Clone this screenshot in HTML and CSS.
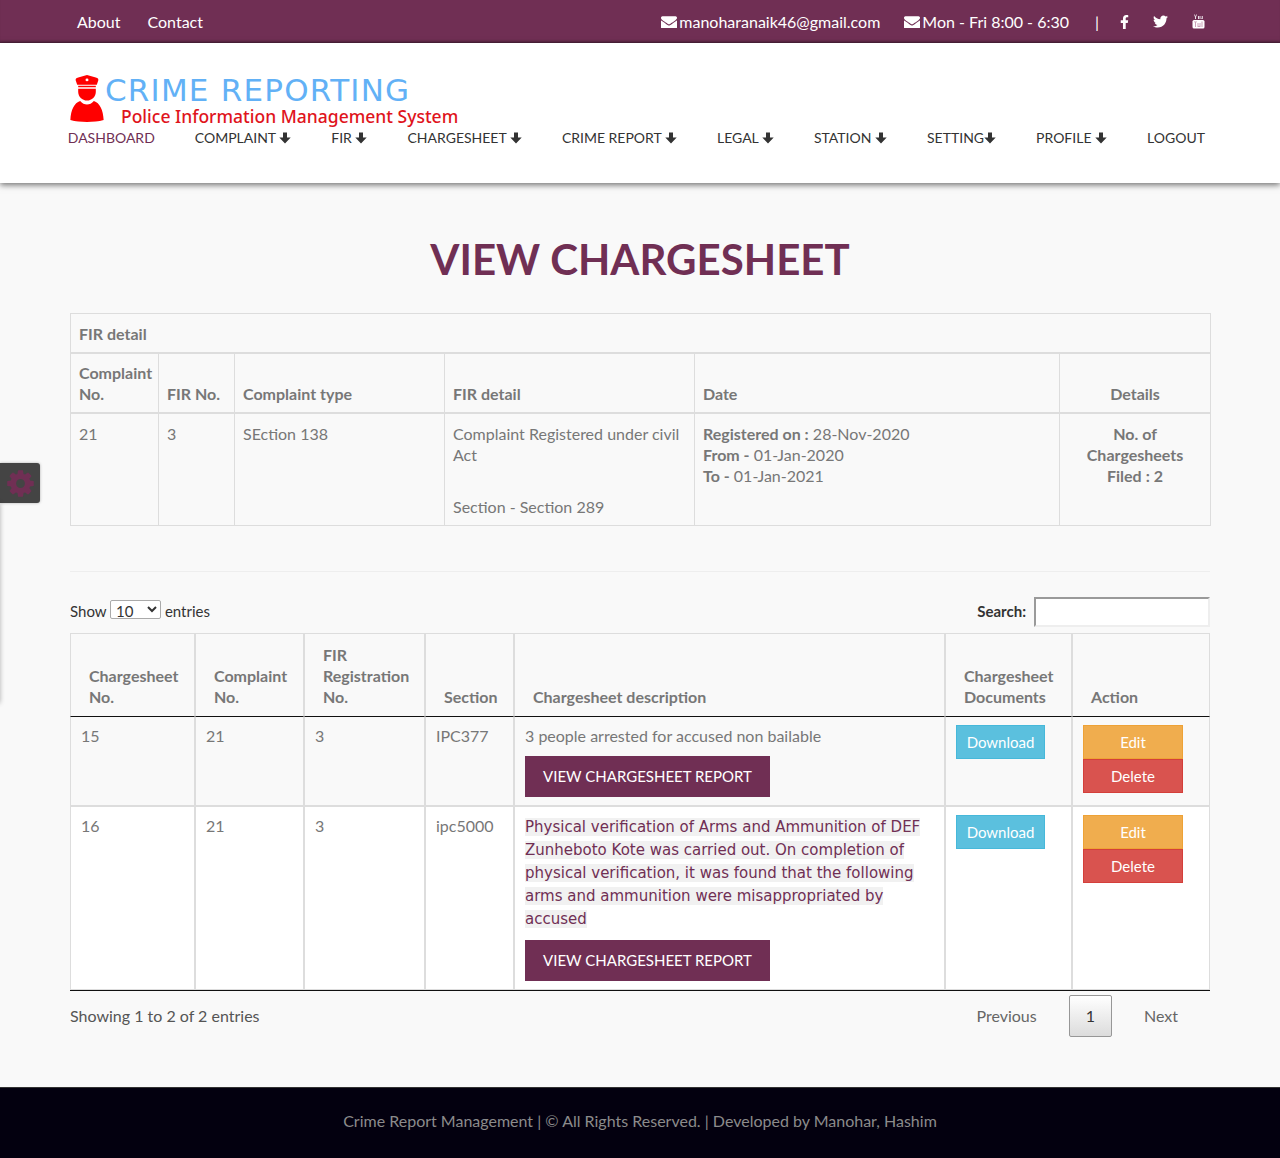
FILE: index.html
```html
<!DOCTYPE html>
<html lang="en">

    <head>
        <meta charset="UTF-8">
        <meta name="viewport" content="width=device-width, initial-scale=1.0">
        <title>View Chargesheet</title>
        <link rel="stylesheet" href="styles.css">
    </head>

    <body>
        <svg class="sprites" width="0" height="0">
            <symbol id="i-mail" viewBox="0 256 1792 1280">
                <path d="M1792 710v794q0 66-47 113t-113 47h-1472q-66 0-113-47t-47-113v-794q44 49 101 87 362 246 497 345 57 42 92.500 65.500t94.500 48 110 24.500h2q51 0 110-24.500t94.500-48 92.500-65.500q170-123 498-345 57-39 100-87zm0-294q0 79-49 151t-122 123q-376 261-468 325-10 7-42.500 30.500t-54 38-52 32.500-57.500 27-50 9h-2q-23 0-50-9t-57.500-27-52-32.500-54-38-42.500-30.500q-91-64-262-182.500t-205-142.500q-62-42-117-115.500t-55-136.500q0-78 41.500-130t118.500-52h1472q65 0 112.500 47t47.500 113z"/>
            </symbol>
            <symbol id="i-down" viewBox="0 0 12 12">
                <path d="M4 0.500h4v5h3.700l-5.700 6-5.700-6h3.700z"/>
            </symbol>
        </svg>

        <div class="topbar">
            <div class="topbar-links">
                <a href="#">About</a>
                <a href="#">Contact</a>
            </div>
            <div class="topbar-info">
                <span class="info"><svg class="mail"><use href="#i-mail"/></svg>manoharanaik46@gmail.com</span>
                <span class="info"><svg class="mail"><use href="#i-mail"/></svg>Mon - Fri 8:00 - 6:30</span>
                <span class="sep">|</span>
                <svg class="social fb" viewBox="0 0 320 512"><path d="M279.14 288l14.22-92.66h-88.91v-60.13c0-25.35 12.42-50.06 52.24-50.06h40.42V6.26S260.43 0 225.36 0c-73.22 0-121.08 44.38-121.08 124.72v70.62H22.89V288h81.39v224h100.17V288z"/></svg>
                <svg class="social tw" viewBox="0 0 512 512"><path d="M459.37 151.716c.325 4.548.325 9.097.325 13.645 0 138.72-105.583 298.558-298.558 298.558-59.452 0-114.68-17.219-161.137-47.106 8.447.974 16.568 1.299 25.34 1.299 49.055 0 94.213-16.568 130.274-44.832-46.132-.975-84.792-31.188-98.112-72.772 6.498.974 12.995 1.624 19.818 1.624 9.421 0 18.843-1.3 27.614-3.573-48.081-9.747-84.143-51.98-84.143-102.985v-1.299c13.969 7.797 30.214 12.67 47.431 13.319-28.264-18.843-46.781-51.005-46.781-87.391 0-19.492 5.197-37.36 14.294-52.954 51.655 63.675 129.3 105.258 216.365 109.807-1.624-7.797-2.599-15.918-2.599-24.04 0-57.828 46.782-104.934 104.934-104.934 30.213 0 57.502 12.67 76.67 33.137 23.715-4.548 46.456-13.32 66.599-25.34-7.798 24.366-24.366 44.833-46.132 57.827 21.117-2.273 41.584-8.122 60.426-16.243-14.292 20.791-32.161 39.308-52.628 54.253z"/></svg>
                <svg class="social yt" viewBox="0 0 13 15">
                    <path d="M2 0.500l1 2.500v2h1v-2l1-2.500h-.800l-.700 1.700-.700-1.700zM6 2h1.500v3h-1.500zM8.500 2h.800v2.500h.700v-2.500h.800v3h-2.300z" fill="#e9dfe6"/>
                    <rect x="0.500" y="6" width="12" height="8.500" rx="1.500" fill="#fff"/>
                    <path d="M2 7.500h3v.800h-1v4.700h-1v-4.700h-1zM5.500 9h1v3h1v-3h1v4h-3zM9.500 7.500h1v5.500h-1z" fill="#c9a3b8"/>
                </svg>
            </div>
        </div>

        <header class="header">
            <div class="logo">
                <svg class="logo-icon" viewBox="0 0 34 48">
                    <path d="M17 0l9 2.500c2 .5 3 1.500 2.500 3l-1.500 4.500h-20l-1.500-4.500c-.500-1.500.500-2.500 2.500-3z"/>
                    <path d="M8 11h18v1.500h-18z"/>
                    <path d="M8 14h18v3c0 5-4 9-9 9s-9-4-9-9z"/>
                    <path d="M10 26.500c2 2.500 4.500 3.500 7 3.500s5-1 7-3.500c6 2 9.500 9 10 19.500-5 1.500-11 2-17 2s-12-.500-17-2c.500-10.500 4-17.500 10-19.500z"/>
                    <circle cx="17" cy="5" r="1.500" fill="#fff"/>
                </svg>
                <div class="logo-text">
                    <div class="logo-name">CRIME REPORTING</div>
                    <div class="logo-sub">Police Information Management System</div>
                </div>
            </div>
            <nav class="nav">
                <a href="#" class="active">DASHBOARD</a>
                <a href="#">COMPLAINT <svg class="down"><use href="#i-down"/></svg></a>
                <a href="#">FIR <svg class="down"><use href="#i-down"/></svg></a>
                <a href="#">CHARGESHEET <svg class="down"><use href="#i-down"/></svg></a>
                <a href="#">CRIME REPORT <svg class="down"><use href="#i-down"/></svg></a>
                <a href="#">LEGAL <svg class="down"><use href="#i-down"/></svg></a>
                <a href="#">STATION <svg class="down"><use href="#i-down"/></svg></a>
                <a href="#">SETTING<svg class="down"><use href="#i-down"/></svg></a>
                <a href="#">PROFILE <svg class="down"><use href="#i-down"/></svg></a>
                <a href="#">LOGOUT</a>
            </nav>
        </header>

        <div class="switcher">
            <svg class="gear" viewBox="0 0 1792 1792"><path d="M1152 896q0-106-75-181t-181-75-181 75-75 181 75 181 181 75 181-75 75-181zm512-109v222q0 12-8 23t-20 13l-185 28q-19 54-39 91 35 50 107 138 10 12 10 25t-9 23q-27 37-99 108t-94 71q-12 0-26-9l-138-108q-44 23-91 38-16 136-29 186-7 28-36 28h-222q-14 0-24.500-8.500t-11.500-21.500l-28-184q-49-16-90-37l-141 107q-10 9-25 9-14 0-25-11-126-114-165-168-7-10-7-23 0-12 8-23 15-21 51-66.500t54-70.500q-27-50-41-99l-183-27q-13-2-21-12.500t-8-23.500v-222q0-12 8-23t19-13l186-28q14-46 39-92-40-57-107-138-10-12-10-24 0-10 9-23 26-36 98.500-107.500t94.500-71.500q13 0 26 10l138 107q44-23 91-38 16-136 29-186 7-28 36-28h222q14 0 24.500 8.500t11.500 21.500l28 184q49 16 90 37l142-107q9-9 24-9 13 0 25 10 129 119 165 170 7 8 7 22 0 12-8 23-15 21-51 66.500t-54 70.500q26 50 41 98l183 28q13 2 21 12.500t8 23.500z"/></svg>
        </div>
        <div class="switcher-panel"></div>

        <main class="main">
            <h1 class="title">VIEW CHARGESHEET</h1>

            <table class="detail">
                <colgroup>
                    <col class="d1"><col class="d2"><col class="d3"><col class="d4"><col class="d5"><col class="d6">
                </colgroup>
                <thead>
                    <tr><th colspan="6" class="detail-head">FIR detail</th></tr>
                    <tr>
                        <th>Complaint No.</th>
                        <th>FIR No.</th>
                        <th>Complaint type</th>
                        <th>FIR detail</th>
                        <th>Date</th>
                        <th class="center">Details</th>
                    </tr>
                </thead>
                <tbody>
                    <tr>
                        <td>21</td>
                        <td>3</td>
                        <td>SEction 138</td>
                        <td>Complaint Registered under civil Act<br><br><span class="section-line">Section - Section 289</span></td>
                        <td><b>Registered on :</b> 28-Nov-2020<br><b>From -</b> 01-Jan-2020<br><b>To -</b> 01-Jan-2021</td>
                        <td class="center"><b>No. of Chargesheets Filed</b> <b>: 2</b></td>
                    </tr>
                </tbody>
            </table>

            <hr class="rule">

            <div class="controls">
                <label class="length">Show
                    <select class="length-select"><option>10</option></select>
                    entries</label>
                <label class="search">Search:
                    <input type="search" class="search-input"></label>
            </div>

            <table class="list">
                <colgroup>
                    <col class="l1"><col class="l2"><col class="l3"><col class="l4"><col class="l5"><col class="l6"><col class="l7">
                </colgroup>
                <thead>
                    <tr>
                        <th>Chargesheet No.</th>
                        <th>Complaint No.</th>
                        <th>FIR Registration No.</th>
                        <th>Section</th>
                        <th>Chargesheet description</th>
                        <th>Chargesheet Documents</th>
                        <th>Action</th>
                    </tr>
                </thead>
                <tbody>
                    <tr class="odd">
                        <td>15</td>
                        <td>21</td>
                        <td>3</td>
                        <td>IPC377</td>
                        <td>
                            <div class="desc">3 people arrested for accused non bailable</div>
                            <a href="#" class="btn-report">VIEW CHARGESHEET REPORT</a>
                        </td>
                        <td><a href="#" class="btn btn-info">Download</a></td>
                        <td>
                            <a href="#" class="btn btn-action btn-warning">Edit</a>
                            <a href="#" class="btn btn-action btn-danger">Delete</a>
                        </td>
                    </tr>
                    <tr class="even">
                        <td>16</td>
                        <td>21</td>
                        <td>3</td>
                        <td>ipc5000</td>
                        <td>
                            <div class="desc"><span class="pasted">Physical verification of Arms and Ammunition of DEF Zunheboto Kote was carried out. On completion of physical verification, it was found that the following arms and ammunition were misappropriated by accused</span></div>
                            <a href="#" class="btn-report">VIEW CHARGESHEET REPORT</a>
                        </td>
                        <td><a href="#" class="btn btn-info">Download</a></td>
                        <td>
                            <a href="#" class="btn btn-action btn-warning">Edit</a>
                            <a href="#" class="btn btn-action btn-danger">Delete</a>
                        </td>
                    </tr>
                </tbody>
            </table>

            <div class="table-foot">
                <div class="table-info">Showing 1 to 2 of 2 entries</div>
                <div class="pager">
                    <a href="#" class="page">Previous</a>
                    <a href="#" class="page current">1</a>
                    <a href="#" class="page">Next</a>
                </div>
            </div>
        </main>

        <footer class="footer">Crime Report Management | © All Rights Reserved. | Developed by Manohar, Hashim</footer>
    </body>

</html>
```

FILE: styles.css
```css
* {
    box-sizing: border-box;
}

body {
    margin: 0;
    font-family: Lato, sans-serif;
    font-size: 16px;
    line-height: 21px;
    color: #777;
    background: #f9f9f9;
}

a {
    text-decoration: none;
}

.sprites {
    position: absolute;
}

.topbar {
    height: 43px;
    padding: 0 75px 0 77px;
    display: flex;
    justify-content: space-between;
    align-items: center;
    background: #702f54;
    color: #fff;
    box-shadow: inset 0 -3px 3px -2px rgba(0, 0, 0, 0.45);
}

.topbar-links {
    display: flex;
    gap: 27px;
}

.topbar-links a {
    color: #fff;
}

.topbar-info {
    display: flex;
    align-items: center;
}

.info {
    margin-right: 24px;
    display: flex;
    align-items: center;
}

.mail {
    width: 16px;
    height: 12px;
    margin-right: 2px;
    fill: #fff;
}

.sep {
    margin: 0 21px 0 2px;
}

.social {
    fill: #fff;
}

.fb {
    width: 9px;
    height: 14px;
    margin-right: 24px;
}

.tw {
    width: 15px;
    height: 15px;
    margin-right: 24px;
}

.yt {
    width: 13px;
    height: 15px;
}

.header {
    height: 140px;
    padding: 32px 75px 0 70px;
    background: #fff;
    box-shadow: 0 2px 6px rgba(0, 0, 0, 0.55);
    position: relative;
}

.logo {
    display: flex;
    height: 48px;
}

.logo-icon {
    width: 34px;
    height: 47px;
    fill: #f00;
}

.logo-text {
    margin-left: 1px;
}

.logo-name {
    width: 350px;
    font-family: "DejaVu Sans", sans-serif;
    font-size: 31px;
    line-height: 30px;
    letter-spacing: 1.2px;
    white-space: nowrap;
    color: #62b1f6;
}

.logo-sub {
    margin: 1px 0 0 16px;
    font-family: "Noto Sans", sans-serif;
    font-size: 17.500px;
    font-weight: 500;
    line-height: 20px;
    white-space: nowrap;
    color: #e0141c;
}

.nav {
    margin-top: 5px;
    display: flex;
    justify-content: flex-end;
    gap: 40px;
}

.nav a {
    font-size: 14px;
    line-height: 20px;
    color: #333;
    white-space: nowrap;
}

.nav a.active {
    color: #702f54;
}

.down {
    width: 12px;
    height: 12px;
    vertical-align: -1px;
    fill: #333;
}

.switcher {
    position: absolute;
    left: 0;
    top: 463px;
    width: 40px;
    height: 40px;
    display: flex;
    align-items: center;
    justify-content: center;
    background: #444;
    border-radius: 0 3px 3px 0;
    box-shadow: 0 0 3px rgba(0, 0, 0, 0.3);
}

.gear {
    width: 31px;
    height: 31px;
    fill: #702f54;
}

.switcher-panel {
    position: absolute;
    left: -10px;
    top: 503px;
    width: 10px;
    height: 200px;
    box-shadow: 0 0 5px rgba(0, 0, 0, 0.3);
}

.main {
    padding: 0 70px;
    height: 904px;
}

.title {
    margin: 0;
    padding-top: 51px;
    height: 130px;
    font-size: 42px;
    line-height: 50px;
    font-weight: 700;
    text-align: center;
    color: #702f54;
}

.detail {
    width: 1140px;
    table-layout: fixed;
    border-collapse: collapse;
}

.d1 { width: 88px; }
.d2 { width: 76px; }
.d3 { width: 210px; }
.d4 { width: 250px; }
.d5 { width: 365px; }
.d6 { width: 151px; }

.detail th,
.detail td {
    padding: 8px;
    border: 1px solid #ddd;
    text-align: left;
    vertical-align: top;
}

.detail th {
    vertical-align: bottom;
    border-bottom-width: 2px;
}

.detail td {
    padding-top: 9px;
    padding-bottom: 8px;
}

.detail .center {
    text-align: center;
}

.detail-head {
    height: 39px;
}

.section-line {
    display: block;
    margin-top: 10px;
}

.rule {
    margin: 45px 0 0;
    border: 0;
    border-top: 1px solid #eee;
}

.controls {
    height: 61px;
    display: flex;
    justify-content: space-between;
    color: #333;
    font-size: 15px;
}

.length {
    margin-top: 28px;
    font-weight: 400;
}

.length-select {
    width: 51px;
    height: 19px;
    padding: 0 0 0 1px;
    font-family: Lato, sans-serif;
    font-size: 15px;
    color: #333;
    background: #fff;
    border: 1px solid #aaa;
    border-radius: 2px;
}

.search {
    margin-top: 25px;
    height: 30px;
    display: flex;
    align-items: center;
    gap: 8px;
    font-weight: 700;
}

.search-input {
    width: 176px;
    height: 30px;
    background: #fff;
    border: 2px inset #eee;
}

.list {
    width: 1140px;
    table-layout: fixed;
    border-collapse: separate;
    border-spacing: 0;
    border-bottom: 1px solid #111;
}

.l1 { width: 125px; }
.l2 { width: 109px; }
.l3 { width: 121px; }
.l4 { width: 89px; }
.l5 { width: 431px; }
.l6 { width: 127px; }
.l7 { width: 138px; }

.list th,
.list td {
    border: 1px solid #ddd;
    text-align: left;
}

.list th {
    padding: 10px 18px 9px;
    vertical-align: bottom;
    border-bottom-color: #111;
    font-weight: 700;
}

.list td {
    padding: 8px 10px;
    vertical-align: top;
}

.list tbody tr:first-child td {
    border-top: 0;
}

.odd td {
    background: #f9f9f9;
}

.even td {
    background: #fff;
}

.desc {
    margin-bottom: 10px;
}

.pasted {
    font-family: "DejaVu Sans", sans-serif;
    font-size: 15px;
    color: #702f54;
    background: #f1f1f1;
}

.btn-report {
    display: block;
    width: 245px;
    height: 41px;
    line-height: 41px;
    text-align: center;
    font-size: 15px;
    color: #fff;
    background: #702f54;
}

.btn {
    display: block;
    height: 34px;
    line-height: 32px;
    font-size: 15px;
    text-align: center;
    color: #fff;
    border: 1px solid transparent;
}

.btn-info {
    width: 89px;
    background: #5bc0de;
    border-color: #46b8da;
}

.btn-action {
    width: 100px;
}

.btn-warning {
    background: #f0ad4e;
    border-color: #eea236;
}

.btn-danger {
    background: #d9534f;
    border-color: #d43f3a;
}

.table-foot {
    display: flex;
    justify-content: space-between;
}

.table-info {
    margin-top: 14px;
    color: #555;
}

.pager {
    margin-top: 4px;
    display: flex;
}

.page {
    height: 42px;
    line-height: 40px;
    padding: 0 31px;
    border: 1px solid transparent;
    color: #666;
}

.page.current {
    padding: 0 16px;
    color: #333;
    border: 1px solid #979797;
    border-radius: 2px;
    background: linear-gradient(to bottom, #fff 0%, #dcdcdc 100%);
}

.footer {
    height: 71px;
    line-height: 66px;
    text-align: center;
    color: #8b8b8b;
    background: #03000f;
    border-top: 1px solid #333;
}
```
